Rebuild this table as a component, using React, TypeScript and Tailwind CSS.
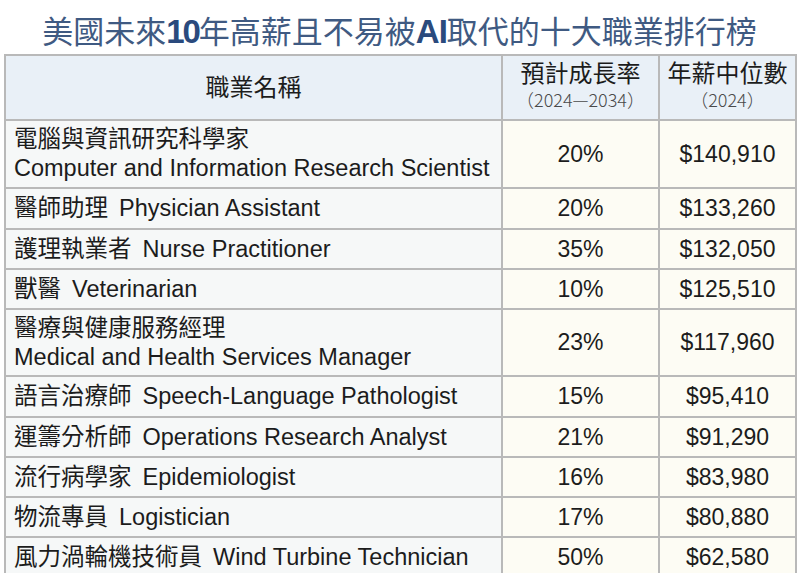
import React from "react";

type Row = { zh: string; en: string; two?: boolean; rate: string; pay: string; h: string };

const rows: Row[] = [
  { zh: "電腦與資訊研究科學家", en: "Computer and Information Research Scientist", two: true, rate: "20%", pay: "$140,910", h: "h-[68px]" },
  { zh: "醫師助理", en: "Physician Assistant", rate: "20%", pay: "$133,260", h: "h-[41px]" },
  { zh: "護理執業者", en: "Nurse Practitioner", rate: "35%", pay: "$132,050", h: "h-[40px]" },
  { zh: "獸醫", en: "Veterinarian", rate: "10%", pay: "$125,510", h: "h-[40px]" },
  { zh: "醫療與健康服務經理", en: "Medical and Health Services Manager", two: true, rate: "23%", pay: "$117,960", h: "h-[67px]" },
  { zh: "語言治療師", en: "Speech-Language Pathologist", rate: "15%", pay: "$95,410", h: "h-[41px]" },
  { zh: "運籌分析師", en: "Operations Research Analyst", rate: "21%", pay: "$91,290", h: "h-[40px]" },
  { zh: "流行病學家", en: "Epidemiologist", rate: "16%", pay: "$83,980", h: "h-[40px]" },
  { zh: "物流專員", en: "Logistician", rate: "17%", pay: "$80,880", h: "h-[40px]" },
  { zh: "風力渦輪機技術員", en: "Wind Turbine Technician", rate: "50%", pay: "$62,580", h: "h-[40px]" },
];

const font = { fontFamily: '"Liberation Sans", "Noto Sans CJK TC", sans-serif' };

export default function App() {
  return (
    <div className="w-[799px] h-[573px] overflow-hidden bg-white text-[#1c1c1c]" style={font}>
      <div className="h-[54px] flex items-center justify-center pt-[8px]">
        <h1
          className="text-[31px] leading-none text-[#3f5a82]"
          style={{ fontFamily: '"Noto Sans CJK TC", "Liberation Sans", sans-serif', fontWeight: 400 }}
        >
          美國未來<span className="font-black text-[#2a4a7d] tracking-[-2px] text-[33px]" style={{ fontFamily: '"Liberation Sans", sans-serif' }}>10</span>年高薪且不易被<span className="font-black text-[#2a4a7d] tracking-[-1px] text-[33px]" style={{ fontFamily: '"Liberation Sans", sans-serif' }}>AI</span>取代的十大職業排行榜
        </h1>
      </div>
      <table className="ml-[4px] w-[791px] border-collapse table-fixed">
        <colgroup>
          <col className="w-[497px]" />
          <col className="w-[157px]" />
          <col className="w-[137px]" />
        </colgroup>
        <thead>
          <tr className="h-[65px] bg-[#e9f0f7]">
            <th className="border-2 border-[#b9b9b9] font-normal text-[24px] text-center">職業名稱</th>
            <th className="border-2 border-[#b9b9b9] font-normal text-center leading-none pb-[4px]">
              <div className="text-[24px] leading-[27px]">預計成長率</div>
              <div className="text-[18px] text-[#4a4a4a] leading-[24px]" style={{ fontFamily: '"Noto Sans CJK TC", sans-serif', fontWeight: 300 }}>（2024—2034）</div>
            </th>
            <th className="border-2 border-[#b9b9b9] font-normal text-center leading-none pb-[4px]">
              <div className="text-[24px] leading-[27px]">年薪中位數</div>
              <div className="text-[18px] text-[#4a4a4a] leading-[24px]" style={{ fontFamily: '"Noto Sans CJK TC", sans-serif', fontWeight: 300 }}>（2024）</div>
            </th>
          </tr>
        </thead>
        <tbody>
          {rows.map((r) => (
            <tr key={r.zh} className={r.h}>
              <td className="border-2 border-[#b9b9b9] bg-[#f6f8f8] pl-[8px] text-[23.5px] leading-[29px] whitespace-nowrap">
                {r.two ? (
                  <>
                    <div>{r.zh}</div>
                    <div>{r.en}</div>
                  </>
                ) : (
                  <div>
                    {r.zh}
                    <span className="ml-[11px]">{r.en}</span>
                  </div>
                )}
              </td>
              <td className="border-2 border-[#b9b9b9] bg-[#fdfcf4] text-center text-[23px]">{r.rate}</td>
              <td className="border-2 border-[#b9b9b9] bg-[#fdfcf4] text-center text-[23px]">{r.pay}</td>
            </tr>
          ))}
        </tbody>
      </table>
    </div>
  );
}
